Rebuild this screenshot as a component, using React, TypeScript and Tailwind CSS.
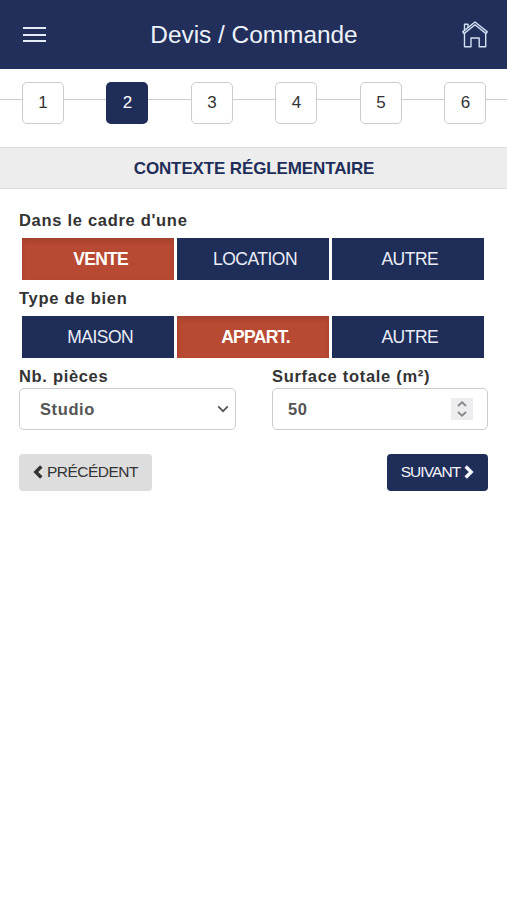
import { useState } from 'react';

const STEPS = [1, 2, 3, 4, 5, 6];

function HomeIcon() {
  return (
    <svg
      width="26"
      height="27"
      viewBox="0 0 26 27"
      fill="none"
      stroke="#d3dff3"
      strokeWidth="1.4"
      strokeLinejoin="round"
    >
      <path d="M13 1 L25.3 10.9 L24 12.6 L13 3.8 L2 12.6 L0.7 10.9 Z" />
      <path d="M2.5 9 V3.2 H6 V6.3" />
      <path d="M2.5 12.4 V25.8 H9 V17 H17.2 V25.8 H23.7 V12.4" />
    </svg>
  );
}

function ChevronIcon({ direction }: { direction: 'left' | 'right' }) {
  return (
    <svg width="10" height="14" viewBox="0 0 10 14" fill="none" stroke="currentColor" strokeWidth="3.4">
      <path d={direction === 'left' ? 'M8.3 1.5 L2.8 7 L8.3 12.5' : 'M1.7 1.5 L7.2 7 L1.7 12.5'} />
    </svg>
  );
}

interface ChoiceGroupProps {
  options: string[];
  value: string;
  onChange: (value: string) => void;
}

function ChoiceGroup({ options, value, onChange }: ChoiceGroupProps) {
  return (
    <div className="ml-[3px] grid h-[42px] w-[462px] grid-cols-3 gap-[2.5px]">
      {options.map((option) => (
        <button
          key={option}
          onClick={() => onChange(option)}
          className={
            option === value
              ? 'bg-[#b84932] pl-[5px] text-[17.5px] font-bold tracking-[-0.7px] text-white shadow-[inset_0_3px_5px_rgba(0,0,0,0.125)]'
              : 'bg-[#1f2d59] pl-[4px] text-[17.5px] tracking-[-0.5px] text-[#e9eef8]'
          }
        >
          {option}
        </button>
      ))}
    </div>
  );
}

export default function App() {
  const [context, setContext] = useState('VENTE');
  const [property, setProperty] = useState('APPART.');
  const [surface, setSurface] = useState(50);
  const currentStep = 2;

  return (
    <main className="min-h-screen w-full bg-white font-['Liberation_Sans',Arial,sans-serif] text-[#333]">
      {/* Header */}
      <header className="flex h-[69px] items-center justify-between bg-[#212f5a] pr-[19px] pl-[23px]">
        <button className="flex w-[23px] flex-col gap-[4.5px]" aria-label="Menu">
          <span className="h-[2px] bg-[#e4ebf8]" />
          <span className="h-[2px] bg-[#e4ebf8]" />
          <span className="h-[2px] bg-[#e4ebf8]" />
        </button>
        <h1 className="pt-px text-[24.4px] text-[#eff3fb]">Devis / Commande</h1>
        <button aria-label="Accueil">
          <HomeIcon />
        </button>
      </header>

      {/* Steps */}
      <nav className="grid h-[78px] grid-cols-6 pt-3">
        {STEPS.map((step) => (
          <div key={step} className="flex h-[43px] items-center">
            <span className="mb-[6px] h-px w-[21.9px] bg-[#ccc]" />
            <span
              className={
                step === currentStep
                  ? 'flex h-[42px] w-[42px] items-center justify-center rounded-[5px] bg-[#1f2d59] text-[17px] text-white'
                  : 'flex h-[42px] w-[42px] items-center justify-center rounded-[5px] border border-[#ccc] text-[17px]'
              }
            >
              {step}
            </span>
            <span className="mb-[6px] h-px flex-1 bg-[#ccc]" />
          </div>
        ))}
      </nav>

      <h2 className="flex h-[42px] items-center justify-center border-y border-[#ddd] bg-[#ededed] pt-px pl-px text-[17px] font-bold tracking-[-0.13px] text-[#1f2d59]">
        CONTEXTE RÉGLEMENTAIRE
      </h2>

      {/* Form */}
      <div className="px-[19px] pt-[19px]">
        <p className="mb-[6px] h-6 text-[16.5px] leading-6 font-bold tracking-[0.7px]">Dans le cadre d'une</p>
        <ChoiceGroup options={['VENTE', 'LOCATION', 'AUTRE']} value={context} onChange={setContext} />

        <p className="mt-[6px] mb-[6px] h-6 text-[16.5px] leading-6 font-bold tracking-[0.75px]">Type de bien</p>
        <ChoiceGroup options={['MAISON', 'APPART.', 'AUTRE']} value={property} onChange={setProperty} />

        <div className="mt-[6px] grid grid-cols-2 gap-9">
          <div>
            <p className="h-6 text-[16.5px] leading-6 font-bold tracking-[0.68px]">Nb. pièces</p>
            <div className="flex h-[42px] items-center justify-between rounded-[5px] border border-[#ccc] pr-[6px] pl-5 text-[16.5px] font-bold tracking-[0.6px] text-[#555]">
              Studio
              <svg width="12" height="8" viewBox="0 0 12 8" fill="none" stroke="#555" strokeWidth="1.7">
                <path d="M1.2 1.3 L6 6.2 L10.8 1.3" />
              </svg>
            </div>
          </div>
          <div>
            <p className="h-6 pl-[0.5px] text-[16.5px] leading-6 font-bold tracking-[0.7px]">Surface totale (m²)</p>
            <div className="flex h-[42px] items-center justify-between rounded-[5px] border border-[#ccc] pr-[14px] pl-[15.5px] text-[16.5px] font-bold tracking-[0.6px] text-[#555]">
              {surface}
              <button
                onClick={() => setSurface(surface + 1)}
                className="flex h-[22px] w-[22px] items-center justify-center bg-[#ededef]"
                aria-label="Ajuster la surface"
              >
                <svg width="10" height="16" viewBox="0 0 10 16" fill="none" stroke="#888" strokeWidth="1.8">
                  <path d="M1 5 L5 1.3 L9 5 M1 11 L5 14.7 L9 11" />
                </svg>
              </button>
            </div>
          </div>
        </div>

        {/* Navigation */}
        <div className="mt-6 flex justify-between">
          <button className="flex h-[37px] w-[133px] items-center justify-center gap-[4px] rounded-[4px] bg-[#ddd] pb-[2px] text-[15.5px] tracking-[-0.5px] text-[#333]">
            <ChevronIcon direction="left" />
            PRÉCÉDENT
          </button>
          <button className="flex h-[37px] w-[101px] items-center justify-center gap-[4px] rounded-[4px] bg-[#1f2d59] pb-[2px] text-[15.5px] tracking-[-0.9px] text-[#f4f6fb]">
            SUIVANT
            <ChevronIcon direction="right" />
          </button>
        </div>
      </div>
    </main>
  );
}
